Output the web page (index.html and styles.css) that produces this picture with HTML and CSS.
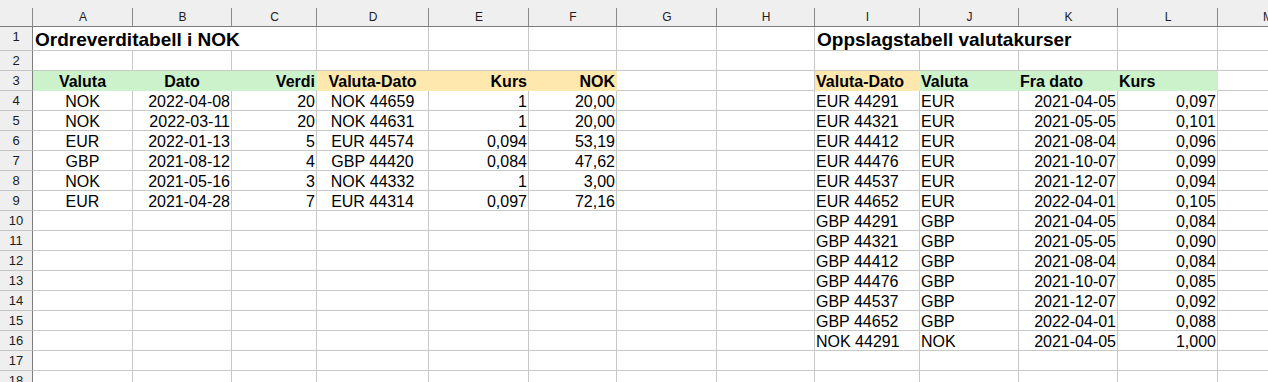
FILE: index.html
```html
<!DOCTYPE html>
<html lang="nb">
<head>
<meta charset="utf-8">
<title>Ordreverditabell</title>
<link rel="stylesheet" href="styles.css">
</head>
<body>
<div class="sheet">
  <div class="ch corner"></div><div class="ch">A</div><div class="ch">B</div><div class="ch">C</div><div class="ch">D</div><div class="ch">E</div><div class="ch">F</div><div class="ch">G</div><div class="ch">H</div><div class="ch">I</div><div class="ch">J</div><div class="ch">K</div><div class="ch">L</div><div class="ch">M</div>

  <div class="rh">1</div><div class="c title span3">Ordreverditabell i NOK</div><div class="c"></div><div class="c"></div><div class="c"></div><div class="c"></div><div class="c"></div><div class="c title span3">Oppslagstabell valutakurser</div><div class="c"></div><div class="c"></div>

  <div class="rh">2</div><div class="c"></div><div class="c"></div><div class="c"></div><div class="c"></div><div class="c"></div><div class="c"></div><div class="c"></div><div class="c"></div><div class="c"></div><div class="c"></div><div class="c"></div><div class="c"></div><div class="c"></div>

  <div class="rh">3</div><div class="c b ctr green">Valuta</div><div class="c b ctr green">Dato</div><div class="c b rt green">Verdi</div><div class="c b ctr yellow">Valuta-Dato</div><div class="c b rt yellow">Kurs</div><div class="c b rt yellow">NOK</div><div class="c"></div><div class="c"></div><div class="c b yellow">Valuta-Dato</div><div class="c b green">Valuta</div><div class="c b green">Fra dato</div><div class="c b green">Kurs</div><div class="c"></div>

  <div class="rh">4</div><div class="c ctr">NOK</div><div class="c rt">2022-04-08</div><div class="c rt">20</div><div class="c ctr">NOK 44659</div><div class="c rt">1</div><div class="c rt">20,00</div><div class="c"></div><div class="c"></div><div class="c">EUR 44291</div><div class="c">EUR</div><div class="c rt">2021-04-05</div><div class="c rt">0,097</div><div class="c"></div>

  <div class="rh">5</div><div class="c ctr">NOK</div><div class="c rt">2022-03-11</div><div class="c rt">20</div><div class="c ctr">NOK 44631</div><div class="c rt">1</div><div class="c rt">20,00</div><div class="c"></div><div class="c"></div><div class="c">EUR 44321</div><div class="c">EUR</div><div class="c rt">2021-05-05</div><div class="c rt">0,101</div><div class="c"></div>

  <div class="rh">6</div><div class="c ctr">EUR</div><div class="c rt">2022-01-13</div><div class="c rt">5</div><div class="c ctr">EUR 44574</div><div class="c rt">0,094</div><div class="c rt">53,19</div><div class="c"></div><div class="c"></div><div class="c">EUR 44412</div><div class="c">EUR</div><div class="c rt">2021-08-04</div><div class="c rt">0,096</div><div class="c"></div>

  <div class="rh">7</div><div class="c ctr">GBP</div><div class="c rt">2021-08-12</div><div class="c rt">4</div><div class="c ctr">GBP 44420</div><div class="c rt">0,084</div><div class="c rt">47,62</div><div class="c"></div><div class="c"></div><div class="c">EUR 44476</div><div class="c">EUR</div><div class="c rt">2021-10-07</div><div class="c rt">0,099</div><div class="c"></div>

  <div class="rh">8</div><div class="c ctr">NOK</div><div class="c rt">2021-05-16</div><div class="c rt">3</div><div class="c ctr">NOK 44332</div><div class="c rt">1</div><div class="c rt">3,00</div><div class="c"></div><div class="c"></div><div class="c">EUR 44537</div><div class="c">EUR</div><div class="c rt">2021-12-07</div><div class="c rt">0,094</div><div class="c"></div>

  <div class="rh">9</div><div class="c ctr">EUR</div><div class="c rt">2021-04-28</div><div class="c rt">7</div><div class="c ctr">EUR 44314</div><div class="c rt">0,097</div><div class="c rt">72,16</div><div class="c"></div><div class="c"></div><div class="c">EUR 44652</div><div class="c">EUR</div><div class="c rt">2022-04-01</div><div class="c rt">0,105</div><div class="c"></div>

  <div class="rh">10</div><div class="c"></div><div class="c"></div><div class="c"></div><div class="c"></div><div class="c"></div><div class="c"></div><div class="c"></div><div class="c"></div><div class="c">GBP 44291</div><div class="c">GBP</div><div class="c rt">2021-04-05</div><div class="c rt">0,084</div><div class="c"></div>

  <div class="rh">11</div><div class="c"></div><div class="c"></div><div class="c"></div><div class="c"></div><div class="c"></div><div class="c"></div><div class="c"></div><div class="c"></div><div class="c">GBP 44321</div><div class="c">GBP</div><div class="c rt">2021-05-05</div><div class="c rt">0,090</div><div class="c"></div>

  <div class="rh">12</div><div class="c"></div><div class="c"></div><div class="c"></div><div class="c"></div><div class="c"></div><div class="c"></div><div class="c"></div><div class="c"></div><div class="c">GBP 44412</div><div class="c">GBP</div><div class="c rt">2021-08-04</div><div class="c rt">0,084</div><div class="c"></div>

  <div class="rh">13</div><div class="c"></div><div class="c"></div><div class="c"></div><div class="c"></div><div class="c"></div><div class="c"></div><div class="c"></div><div class="c"></div><div class="c">GBP 44476</div><div class="c">GBP</div><div class="c rt">2021-10-07</div><div class="c rt">0,085</div><div class="c"></div>

  <div class="rh">14</div><div class="c"></div><div class="c"></div><div class="c"></div><div class="c"></div><div class="c"></div><div class="c"></div><div class="c"></div><div class="c"></div><div class="c">GBP 44537</div><div class="c">GBP</div><div class="c rt">2021-12-07</div><div class="c rt">0,092</div><div class="c"></div>

  <div class="rh">15</div><div class="c"></div><div class="c"></div><div class="c"></div><div class="c"></div><div class="c"></div><div class="c"></div><div class="c"></div><div class="c"></div><div class="c">GBP 44652</div><div class="c">GBP</div><div class="c rt">2022-04-01</div><div class="c rt">0,088</div><div class="c"></div>

  <div class="rh">16</div><div class="c"></div><div class="c"></div><div class="c"></div><div class="c"></div><div class="c"></div><div class="c"></div><div class="c"></div><div class="c"></div><div class="c">NOK 44291</div><div class="c">NOK</div><div class="c rt">2021-04-05</div><div class="c rt">1,000</div><div class="c"></div>

  <div class="rh">17</div><div class="c"></div><div class="c"></div><div class="c"></div><div class="c"></div><div class="c"></div><div class="c"></div><div class="c"></div><div class="c"></div><div class="c"></div><div class="c"></div><div class="c"></div><div class="c"></div><div class="c"></div>

  <div class="rh">18</div><div class="c"></div><div class="c"></div><div class="c"></div><div class="c"></div><div class="c"></div><div class="c"></div><div class="c"></div><div class="c"></div><div class="c"></div><div class="c"></div><div class="c"></div><div class="c"></div><div class="c"></div>
</div>
</body>
</html>
```
FILE: styles.css
```css
html, body {
  margin: 0;
  padding: 0;
  background: #ffffff;
  overflow: hidden;
}

.sheet {
  display: grid;
  grid-template-columns: 33px 100px 99px 85px 112px 100px 88px 100px 98px 105px 99px 99px 100px 100px;
  grid-template-rows: 27px 24px repeat(17, 20px);
  width: 1318px;
  font-family: "Liberation Sans", Arial, sans-serif;
  color: #000000;
}

.ch {
  box-sizing: border-box;
  background: linear-gradient(#8a8a8a, #8a8a8a) right bottom / 1px 18px no-repeat, #efefef;
  border-bottom: 1px solid #7c7c7c;
  padding-top: 8px;
  font-size: 12px;
  line-height: 18px;
  text-align: center;
  color: #1c1c1c;
}

.rh {
  box-sizing: border-box;
  background: #efefef;
  border-right: 1px solid #7c7c7c;
  border-bottom: 1px solid #c4c4c4;
  font-size: 13px;
  line-height: 19px;
  text-align: center;
  color: #1c1c1c;
}

.c {
  box-sizing: border-box;
  border-right: 1px solid #c8c8c8;
  border-bottom: 1px solid #c8c8c8;
  padding: 0 1px;
  font-size: 16px;
  line-height: 21px;
  white-space: nowrap;
}

.title {
  font-size: 19px;
  line-height: 25px;
  font-weight: bold;
  padding-left: 2px;
}

.span3 {
  grid-column: span 3;
}

.b { font-weight: bold; }
.ctr { text-align: center; }
.rt { text-align: right; }

.green {
  background: #ccf2cc;
  border-right-color: #ccf2cc;
  border-bottom-color: #ccf2cc;
}

.yellow {
  background: #ffe8ae;
  border-right-color: #ffe8ae;
  border-bottom-color: #ffe8ae;
}
```
